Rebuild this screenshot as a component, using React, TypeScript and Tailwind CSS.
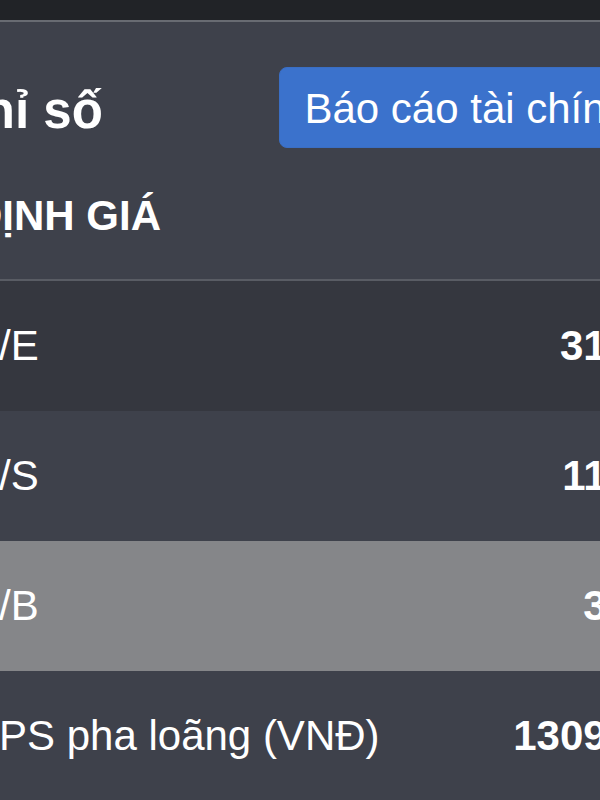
import React from "react";

type Row = {
  label: string;
  value: string;
  bg: string;
};

const rows: Row[] = [
  { label: "P/E", value: "31.52", bg: "bg-[#35373f]" },
  { label: "P/S", value: "11.27", bg: "bg-[#3e414b]" },
  { label: "P/B", value: "3.84", bg: "bg-[#858689]" },
  { label: "EPS pha loãng (VNĐ)", value: "1309.47", bg: "bg-[#3e414b]" },
];

export default function App() {
  return (
    <div className="w-[600px] h-[800px] overflow-hidden bg-[#3e414b] text-white font-['Liberation_Sans',Arial,sans-serif]">
      {/* top nav strip */}
      <div className="h-[20px] bg-[#212327]" />
      <div className="h-[2px] bg-[#686b72]" />

      <div className="-ml-[29px] w-[694px]">
        {/* card header */}
        <div className="flex items-start pt-[45px]">
          <h2 className="-ml-[24px] mt-[15px] text-[51px] font-bold leading-[58px] whitespace-nowrap">
            Chỉ số
          </h2>
          <button
            type="button"
            className="ml-auto mr-[11px] h-[81px] px-[24px] py-[9px] rounded-[8px] bg-[#3b72cc] border border-[#3a6ec4] text-[42px] leading-[63px] whitespace-nowrap"
          >
            Báo cáo tài chính
          </button>
        </div>

        {/* section title */}
        <div className="mt-[44px] pb-[39px] border-b-2 border-[#595c64]">
          <div className="ml-[1px] text-[42px] font-bold leading-[48px] whitespace-nowrap">
            ĐỊNH GIÁ
          </div>
        </div>

        {/* ratio rows */}
        {rows.map((row, index) => (
          <div
            key={index}
            className={`h-[130px] flex items-center justify-between text-[42px] leading-[48px] ${row.bg}`}
          >
            <span className="whitespace-nowrap">{row.label}</span>
            <span className="font-bold whitespace-nowrap">{row.value}</span>
          </div>
        ))}
      </div>
    </div>
  );
}
